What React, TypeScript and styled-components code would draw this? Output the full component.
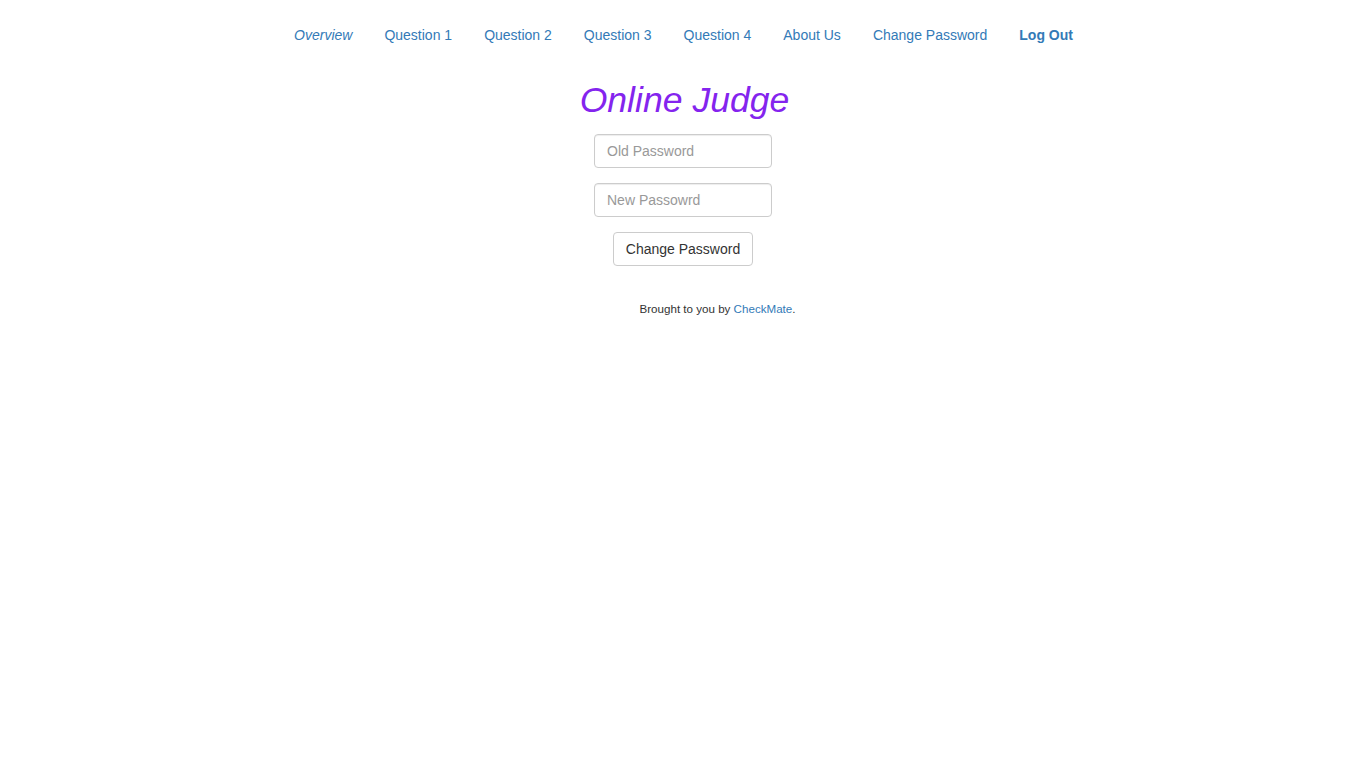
import React from "react";
import styled, { createGlobalStyle } from "styled-components";

const Global = createGlobalStyle`
  html, body { margin: 0; padding: 0; background: #fff; }
  body {
    font-family: "Liberation Sans", Arial, Helvetica, sans-serif;
    font-size: 14px;
    line-height: 20px;
    color: #333;
  }
  * { box-sizing: border-box; }
`;

const Page = styled.div`
  display: flex;
  flex-direction: column;
  align-items: center;
  padding-top: 15px;
`;

const Nav = styled.ul`
  display: flex;
  list-style: none;
  margin: 0;
  padding: 0;
  margin-left: 1px;
`;

const NavItem = styled.li``;

const NavLink = styled.a<{ $italic?: boolean; $bold?: boolean }>`
  display: block;
  padding: 10px 16px;
  color: #337ab7;
  text-decoration: none;
  font-style: ${(p) => (p.$italic ? "italic" : "normal")};
  font-weight: ${(p) => (p.$bold ? "bold" : "normal")};
  cursor: pointer;
`;

const Title = styled.h1`
  margin: 25px 0 14px 3px;
  font-size: 35.6px;
  line-height: 40px;
  font-style: italic;
  font-weight: normal;
  color: #8424ee;
`;

const Form = styled.form`
  display: flex;
  flex-direction: column;
  align-items: center;
  gap: 15px;
`;

const Input = styled.input`
  width: 178px;
  height: 34px;
  padding: 6px 12px;
  font-family: inherit;
  font-size: 14px;
  color: #555;
  border: 1px solid #ccc;
  border-radius: 4px;
  box-shadow: inset 0 1px 1px rgba(0, 0, 0, 0.075);
  outline: none;
  &::placeholder { color: #999; }
`;

const Button = styled.button`
  height: 34px;
  padding: 6px 12px;
  font-family: inherit;
  font-size: 14px;
  line-height: 20px;
  color: #333;
  background: #fff;
  border: 1px solid #ccc;
  border-radius: 4px;
  cursor: pointer;
`;

const Footer = styled.p`
  margin: 36px 0 0 69px;
  font-size: 11.6px;
  line-height: 14px;
  color: #333;
`;

const FooterLink = styled.a`
  color: #337ab7;
  text-decoration: none;
`;

const links = ["Question 1", "Question 2", "Question 3", "Question 4", "About Us", "Change Password"];

export default function App() {
  return (
    <>
      <Global />
      <Page>
        <Nav>
          <NavItem>
            <NavLink $italic>Overview</NavLink>
          </NavItem>
          {links.map((l) => (
            <NavItem key={l}>
              <NavLink>{l}</NavLink>
            </NavItem>
          ))}
          <NavItem>
            <NavLink $bold>Log Out</NavLink>
          </NavItem>
        </Nav>
        <Title>Online Judge</Title>
        <Form onSubmit={(e) => e.preventDefault()}>
          <Input type="password" placeholder="Old Password" />
          <Input type="password" placeholder="New Passowrd" />
          <Button type="submit">Change Password</Button>
        </Form>
        <Footer>
          Brought to you by <FooterLink>CheckMate</FooterLink>.
        </Footer>
      </Page>
    </>
  );
}
